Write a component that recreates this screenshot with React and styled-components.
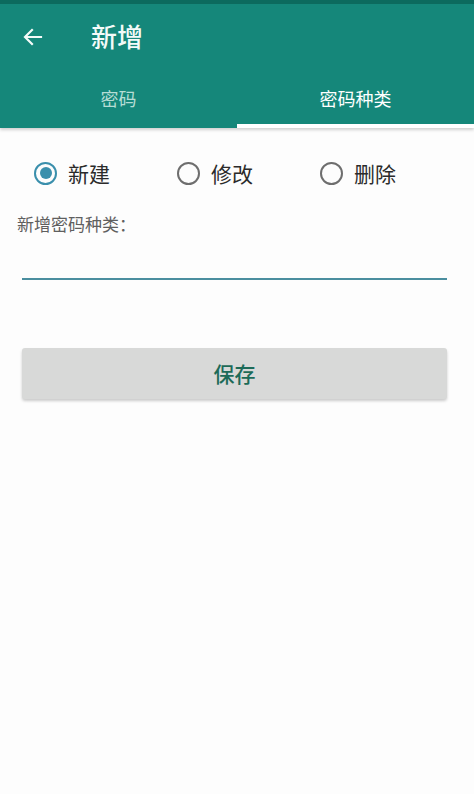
import styled, { createGlobalStyle } from 'styled-components';

const GlobalStyle = createGlobalStyle`
  html, body {
    margin: 0;
    padding: 0;
    background: #fdfdfd;
  }
  * {
    box-sizing: border-box;
  }
  body {
    font-family: "Noto Sans CJK SC", "Noto Sans", Roboto, sans-serif;
  }
`;

const Page = styled.div`
  width: 474px;
  height: 794px;
  background: #fdfdfd;
  display: flex;
  flex-direction: column;
`;

const AppBar = styled.div`
  background: #15877a;
  border-top: 4px solid #0c6a5e;
  box-shadow: 0 2px 3px rgba(0, 0, 0, 0.18);
  display: flex;
  flex-direction: column;
`;

const Toolbar = styled.div`
  height: 66px;
  display: flex;
  align-items: center;
  padding-left: 21px;
  gap: 46px;
`;

const Title = styled.div`
  color: #f4fbf9;
  font-size: 26px;
  font-weight: 500;
  padding-bottom: 4px;
`;

const Tabs = styled.div`
  display: flex;
  height: 58px;
`;

const Tab = styled.div`
  flex: 1;
  display: flex;
  align-items: center;
  justify-content: center;
  font-size: 18px;
  color: ${p => (p.$active ? '#ffffff' : '#b5ddd5')};
  border-bottom: 4px solid ${p => (p.$active ? '#ffffff' : 'transparent')};
  padding-top: 2px;
`;

const Content = styled.div`
  padding: 30px 27px 0 17px;
  display: flex;
  flex-direction: column;
`;

const RadioRow = styled.div`
  display: flex;
  padding-left: 17px;
`;

const RadioItem = styled.label`
  display: flex;
  align-items: center;
  gap: 11px;
  width: 143px;
  flex-shrink: 0;
  font-size: 21px;
  color: #2b2b2b;
`;

const Circle = styled.span`
  width: 23px;
  height: 23px;
  border-radius: 50%;
  border: 2px solid ${p => (p.$checked ? '#3a8fac' : '#6e6e6e')};
  display: flex;
  align-items: center;
  justify-content: center;

  &::after {
    content: '';
    width: 12px;
    height: 12px;
    border-radius: 50%;
    background: ${p => (p.$checked ? '#3a8fac' : 'transparent')};
  }
`;

const FieldLabel = styled.div`
  margin-top: 23px;
  font-size: 17px;
  color: #5f5f5f;
`;

const Input = styled.div`
  margin: 42px 0 0 5px;
  height: 2px;
  background: #4a8e9f;
`;

const SaveButton = styled.button`
  margin: 68px 0 0 5px;
  height: 51px;
  padding-bottom: 3px;
  border: none;
  border-radius: 3px;
  background: #d8d9d8;
  box-shadow: 0 2px 3px rgba(0, 0, 0, 0.2);
  color: #1d6b58;
  font-family: inherit;
  font-size: 21px;
  font-weight: 500;
`;

const options = [
  { label: '新建', checked: true },
  { label: '修改', checked: false },
  { label: '删除', checked: false },
];

function BackArrow() {
  return (
    <svg width="24" height="24" viewBox="0 0 24 24" fill="none">
      <path d="M20 12H4.5M11 5l-7 7 7 7" stroke="#f4fbf9" strokeWidth="2.2" strokeLinecap="square" />
    </svg>
  );
}

export default function App() {
  return (
    <Page>
      <GlobalStyle />
      <AppBar>
        <Toolbar>
          <BackArrow />
          <Title>新增</Title>
        </Toolbar>
        <Tabs>
          <Tab>密码</Tab>
          <Tab $active>密码种类</Tab>
        </Tabs>
      </AppBar>
      <Content>
        <RadioRow>
          {options.map(o => (
            <RadioItem key={o.label}>
              <Circle $checked={o.checked} />
              {o.label}
            </RadioItem>
          ))}
        </RadioRow>
        <FieldLabel>新增密码种类：</FieldLabel>
        <Input />
        <SaveButton>保存</SaveButton>
      </Content>
    </Page>
  );
}
